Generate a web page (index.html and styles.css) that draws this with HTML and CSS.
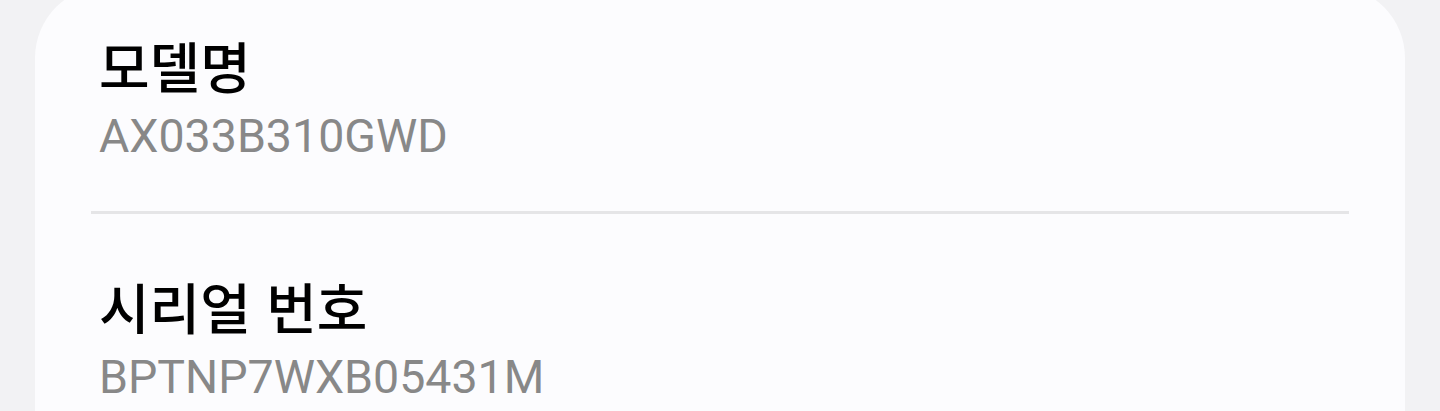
FILE: index.html
```html
<!DOCTYPE html>
<html lang="ko">
<head>
<meta charset="utf-8">
<link rel="stylesheet" href="styles.css">
</head>
<body>
  <div class="card">
    <div class="row">
      <div class="title">모델명</div>
      <div class="value">AX033B310GWD</div>
    </div>
    <div class="divider"></div>
    <div class="row row-second">
      <div class="title">시리얼 번호</div>
      <div class="value">BPTNP7WXB05431M</div>
    </div>
  </div>
</body>
</html>
```
FILE: styles.css
```css
html, body {
  margin: 0;
  padding: 0;
}
body {
  background: #f2f2f4;
  width: 1440px;
  height: 411px;
  overflow: hidden;
  font-family: Roboto, "Noto Sans CJK KR", sans-serif;
}
.card {
  margin: -14px 0 0 35px;
  width: 1370px;
  height: 425px;
  background: #fcfcfe;
  border-radius: 72px 72px 0 0;
  padding-top: 48px;
  box-sizing: border-box;
  overflow: hidden;
}
.row {
  padding-left: 64px;
}
.title {
  font-family: "Noto Sans CJK KR", sans-serif;
  font-size: 55px;
  font-weight: 500;
  line-height: 60px;
  height: 60px;
  color: #000;
}
.value {
  margin-top: 14px;
  font-family: Roboto, sans-serif;
  font-size: 46.5px;
  line-height: 56px;
  color: #888888;
}
.divider {
  margin: 47px 56px 0 56px;
  height: 3px;
  background: #e5e5e7;
}
.row-second {
  margin-top: 61px;
}
```
